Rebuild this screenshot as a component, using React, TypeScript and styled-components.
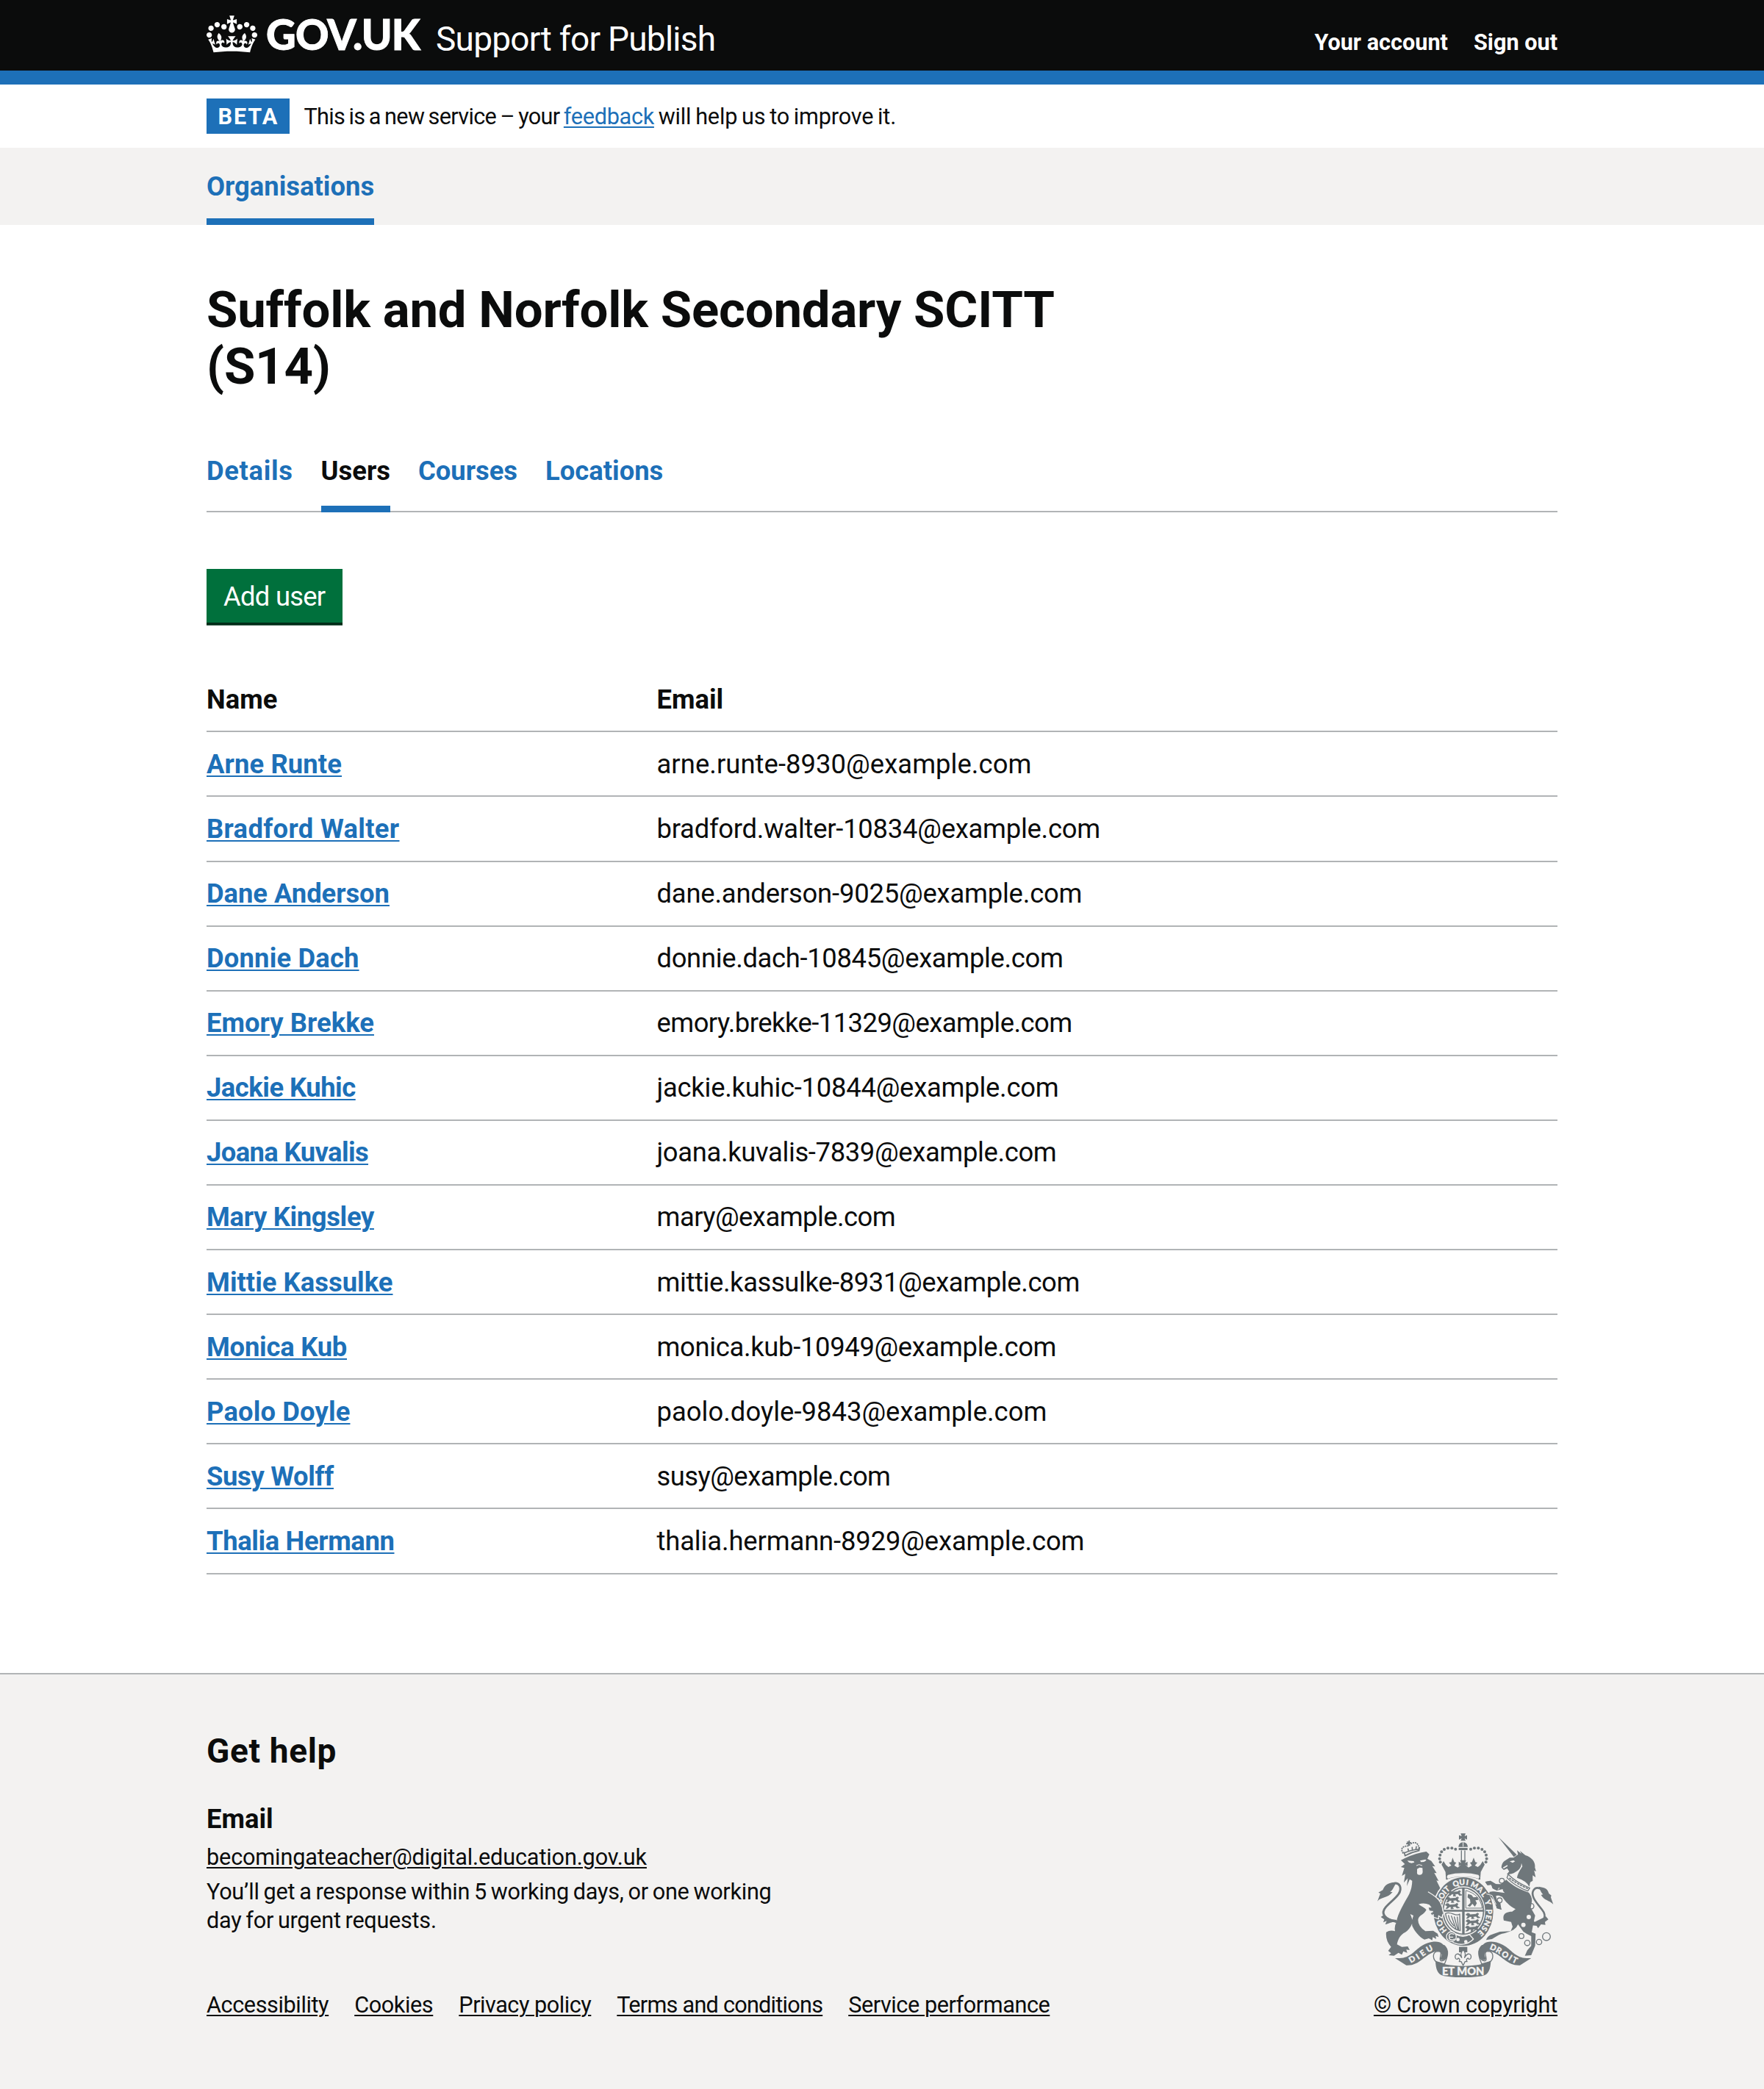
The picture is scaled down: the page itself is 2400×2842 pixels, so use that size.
import React from 'react';
import styled, { createGlobalStyle } from 'styled-components';

const color = {
  ink: '#0b0c0c',
  link: '#1d70b8',
  line: '#b1b4b6',
  panel: '#f3f2f1',
  green: '#00703c',
  greenShadow: '#002d18',
  arms: '#6f777b',
};

const GlobalStyle = createGlobalStyle`
  *, *::before, *::after { box-sizing: border-box; }
  body {
    margin: 0;
    background: #fff;
    color: ${color.ink};
    font-family: Roboto, "Liberation Sans", Arial, sans-serif;
    font-size: 36.4px;
    line-height: 48px;
    -webkit-font-smoothing: antialiased;
  }
  h1, h2, h3, p, ul { margin: 0; padding: 0; }
  ul { list-style: none; }
`;

const Container = styled.div`
  width: 1838px;
  margin: 0 auto;
`;

const Label = styled.span<{ $track?: number }>`
  letter-spacing: ${(p) => p.$track ?? 0}px;
`;

const Link = styled.a<{ $track?: number; $tone?: string }>`
  color: ${(p) => p.$tone ?? color.link};
  letter-spacing: ${(p) => p.$track ?? 0}px;
  white-space: nowrap;
  text-decoration: underline;
  text-decoration-thickness: 2.2px;
  text-underline-offset: 2.8px;
`;

/* Header */
const Header = styled.header`
  height: 115px;
  background: ${color.ink};
  border-bottom: 19px solid ${color.link};
  color: #fff;
`;
const HeaderRow = styled(Container)`
  display: flex;
  align-items: flex-start;
`;
const Crown = styled.svg`
  width: 69px;
  height: 51px;
  margin-top: 20.5px;
  fill: #fff;
`;
const Wordmark = styled.span`
  margin: 17.2px 0 0 12px;
  width: 231px;
  font-family: Lato, Roboto, sans-serif;
  font-size: 56.2px;
  font-weight: 900;
  line-height: 60px;
  letter-spacing: -0.8px;
  -webkit-text-stroke: 0.9px #fff;
`;
const ServiceName = styled.span`
  margin-top: 23.6px;
  font-size: 46px;
  line-height: 58px;
  letter-spacing: -0.75px;
`;
const AccountNav = styled.nav`
  display: flex;
  gap: 35px;
  margin: 38.5px 0 0 auto;
  font-size: 30.63px;
  font-weight: 700;
  line-height: 38px;
`;

/* Phase banner */
const PhaseBanner = styled(Container)`
  display: flex;
  align-items: center;
  height: 86px;
  font-size: 30.63px;
  line-height: 48px;
`;
const PhaseTag = styled.strong`
  width: 113px;
  height: 48px;
  margin-right: 19.5px;
  padding: 1px 0 0 15.5px;
  background: ${color.link};
  color: #fff;
  letter-spacing: 1.9px;
`;
const PhaseText = styled.p`
  padding-top: 1px;
  word-spacing: -1.6px;
`;

/* Navigation */
const PrimaryNav = styled.nav`
  height: 105px;
  background: ${color.panel};
`;
const PrimaryRow = styled(Container)`
  display: flex;
`;
const PrimaryItem = styled.a`
  height: 105px;
  padding-top: 29px;
  border-bottom: 9px solid ${color.link};
  color: ${color.link};
  font-weight: 700;
`;
const Title = styled.h1`
  width: 1220px;
  padding-top: 78px;
  font-size: 68.9px;
  line-height: 76.6px;
  letter-spacing: -0.2px;
`;
const Tabs = styled.nav`
  display: flex;
  gap: 38px;
  margin-top: 80.3px;
  border-bottom: 2px solid ${color.line};
`;
const Tab = styled.a<{ $current?: boolean }>`
  margin-bottom: -2px;
  padding-bottom: 23px;
  border-bottom: 9px solid ${(p) => (p.$current ? color.link : 'transparent')};
  color: ${(p) => (p.$current ? color.ink : color.link)};
  font-weight: 700;
`;
const AddButton = styled.button`
  display: block;
  width: 184.5px;
  height: 73px;
  margin: 76.6px 0 0;
  padding: 2px 0 0;
  border: 0;
  background: ${color.green};
  box-shadow: 0 3.8px 0 ${color.greenShadow};
  color: #fff;
  font: inherit;
  letter-spacing: -0.75px;
`;

/* Table */
const Table = styled.div`
  margin-top: 61.2px;
`;
const Row = styled.div`
  display: grid;
  grid-template-columns: 612.5px 1fr;
  height: 88.1px;
  padding-top: 19.4px;
  border-bottom: 2px solid ${color.line};
`;
const Cell = styled.div<{ $strong?: boolean }>`
  font-weight: ${(p) => (p.$strong ? 700 : 400)};
`;

/* Footer */
const Footer = styled.footer`
  height: 567px;
  margin-top: 134px;
  border-top: 2px solid ${color.line};
  background: ${color.panel};
  font-size: 30.63px;
  line-height: 38.3px;
`;
const FooterRow = styled(Container)`
  display: flex;
  justify-content: space-between;
  align-items: flex-end;
  padding-top: 76px;
`;
const HelpTitle = styled.h2`
  font-size: 46px;
  line-height: 57.4px;
  letter-spacing: 0.65px;
`;
const HelpSubtitle = styled.h3`
  margin: 39.6px 0 9.1px;
  font-size: 36.4px;
  line-height: 48px;
`;
const HelpText = styled.p`
  width: 800px;
  margin-top: 9.4px;
  letter-spacing: -0.27px;
  word-spacing: -1.4px;
`;
const FooterLinks = styled.ul`
  display: flex;
  gap: 35px;
  margin-top: 76.7px;
`;
const Licence = styled.div`
  display: flex;
  flex-direction: column;
  align-items: center;
  width: 250px;
`;
const Arms = styled.svg`
  width: 239.3px;
  height: 196.3px;
  margin-bottom: 18.6px;
  fill: ${color.arms};
  stroke-linecap: round;
  stroke-linejoin: round;

  .line { fill: none; stroke: ${color.arms}; }
  .gap { fill: ${color.panel}; }
  .cut { fill: none; stroke: ${color.panel}; }
  text {
    fill: ${color.panel};
    stroke: ${color.panel};
    stroke-width: 1;
    font-family: Lato, sans-serif;
    font-weight: 900;
    text-anchor: middle;
  }
`;

const CrownMark = () => (
  <Crown viewBox="0 0 132 97" aria-hidden="true">
    <path d="M25 30.2c3.5 1.5 7.7-.2 9.1-3.7 1.5-3.6-.2-7.8-3.9-9.2-3.6-1.4-7.6.3-9.1 3.9-1.4 3.5.3 7.5 3.9 9zM9 39.5c3.6 1.5 7.8-.2 9.2-3.7 1.5-3.6-.2-7.8-3.9-9.1-3.6-1.5-7.6.2-9.1 3.8-1.4 3.5.3 7.5 3.8 9zM4.4 57.2c3.5 1.5 7.7-.2 9.1-3.8 1.5-3.6-.2-7.7-3.9-9.1-3.5-1.5-7.6.3-9.1 3.8-1.4 3.5.3 7.6 3.9 9.1zm38.3-21.4c3.5 1.5 7.7-.2 9.1-3.8 1.5-3.6-.2-7.7-3.9-9.1-3.6-1.5-7.6.3-9.1 3.8-1.3 3.6.4 7.7 3.9 9.1zm64.4-5.6c-3.6 1.5-7.8-.2-9.1-3.7-1.5-3.6.2-7.8 3.8-9.2 3.6-1.4 7.7.3 9.2 3.9 1.3 3.5-.4 7.5-3.9 9zm15.9 9.3c-3.6 1.5-7.7-.2-9.1-3.7-1.5-3.6.2-7.8 3.7-9.1 3.6-1.5 7.7.2 9.2 3.8 1.5 3.5-.3 7.5-3.8 9zm4.7 17.7c-3.6 1.5-7.8-.2-9.2-3.8-1.5-3.6.2-7.7 3.9-9.1 3.6-1.5 7.7.3 9.2 3.8 1.3 3.5-.4 7.6-3.9 9.1zM89.3 35.8c-3.6 1.5-7.8-.2-9.2-3.8-1.4-3.6.2-7.7 3.9-9.1 3.6-1.5 7.7.3 9.2 3.8 1.4 3.6-.3 7.7-3.9 9.1zM69.7 17.7l8.9 4.7V9.3l-8.9 2.8c-.2-.3-.5-.6-.9-.9L72.4 0H59.6l3.5 11.2c-.3.3-.6.5-.9.9l-8.8-2.8v13.1l8.8-4.7c.3.3.6.7.9.9l-5 15.4v.1c-.2.8-.4 1.6-.4 2.4 0 4.1 3.1 7.5 7 8.1h.2c.3 0 .7.1 1 .1.4 0 .7 0 1-.1h.2c4-.6 7.1-4.1 7.1-8.1 0-.8-.1-1.7-.4-2.4V34l-5.1-15.4c.4-.2.7-.6 1-.9zM66 92.8c16.9 0 32.8 1.1 47.1 3.2 4-16.9 8.9-26.7 14-33.5l-9.6-3.4c1 4.9 1.1 7.2 0 10.2-1.5-1.4-3-4.3-4.2-8.7L108.6 76c2.8-2 5-3.2 7.5-3.3-4.4 9.4-10 11.9-13.6 11.2-4.3-.8-6.3-4.6-5.6-7.9 1-4.7 5.7-5.9 8-.5 4.3-8.7-3-11.4-7.6-8.8 7.1-7.2 7.9-13.5 2.1-21.1-8 6.1-8.1 12.3-4.5 20.8-4.7-5.4-12.1-2.5-9.5 6.2 3.4-5.2 7.9-2 7.2 3.1-.6 4.3-6.4 7.8-13.5 7.2-10.3-.9-10.9-8-11.2-13.8 2.5-.5 7.1 1.8 11 7.3L80.2 60c-4.1 4.4-8 5.3-12.3 5.4 1.4-4.4 8-11.6 8-11.6H55.5s6.4 7.2 7.9 11.6c-4.2-.1-8-1-12.3-5.4l1.4 16.4c3.9-5.5 8.5-7.7 10.9-7.3-.3 5.8-.9 12.8-11.1 13.8-7.2.6-12.9-2.9-13.5-7.2-.7-5 3.8-8.3 7.1-3.1 2.7-8.7-4.6-11.6-9.4-6.2 3.7-8.5 3.6-14.7-4.6-20.8-5.8 7.6-5 13.9 2.2 21.1-4.7-2.6-11.9.1-7.7 8.8 2.3-5.5 7.1-4.2 8.1.5.7 3.3-1.3 7.1-5.7 7.9-3.5.7-9-1.8-13.5-11.2 2.5.1 4.7 1.3 7.5 3.3l-4.7-15.4c-1.2 4.4-2.7 7.2-4.3 8.7-1.1-3-.9-5.3 0-10.2l-9.5 3.4c5 6.9 9.9 16.7 14 33.5 14.8-2.1 30.8-3.2 47.7-3.2z" />
  </Crown>
);

/* Garter motto: each letter with its clockwise angle from the top. */
const motto: [string, number][] = [
  ['H', -128], ['O', -113], ['S', -68], ['O', -57], ['I', -48], ['T', -40],
  ['Q', -17], ['U', -3], ['I', 9], ['M', 26], ['A', 41], ['L', 54], ['Y', 72],
  ['P', 90], ['E', 101], ['N', 113], ['S', 125], ['E', 137],
];
const crownPearls: [number, number][] = [
  [329, 186], [326, 172], [328, 157], [334, 144], [345, 134], [360, 129], [376, 129], [391, 133],
];
const scroll: [string, number, number, number][] = [
  ['D', 213, 582, -30], ['I', 236, 571, -33], ['E', 257, 557, -35], ['U', 284, 539, -28],
  ['D', 545, 534, 22], ['R', 568, 546, 30], ['O', 594, 563, 33], ['I', 615, 576, 32], ['T', 634, 586, 25],
];
const chain: [number, number, number][] = [
  [580, 262, 10], [571, 342, 10], [700, 366, 11], [660, 488, 10], [684, 516, 11], [732, 512, 11], [762, 490, 16],
];

const LionPassant = ({ x, y }: { x: number; y: number }) => (
  <g transform={`translate(${x} ${y})`}>
    <path
      stroke={color.arms}
      strokeWidth="2.5"
      d="M0 6l6-5 7 1 4 5 22-2 8-5 5 4-5 4 3 7 7 3-10 2-6-7-10 1-3 6 5 2-11 1 2-8-8-1-6 6-8 2 6-9z"
    />
  </g>
);

const RoyalArms = () => (
  <Arms viewBox="72 68 718 589" role="img" aria-label="Royal coat of arms">
    {/* lion */}
    <path d="M168 178L186 169Q232 148 272 143L284 154 276 172 292 181 308 204 296 202 314 231 304 230 322 263 313 261 332 300 320 302 316 322 330 360 330 392 318 402 324 414 306 410 312 398 298 404 290 396 301 386 285 384 281 372 294 372 284 360Q262 350 240 358C252 366 266 372 272 381C262 402 240 402 238 422Q238 448 268 468L300 466 318 478 322 492 310 487 312 500 298 492 296 505 282 497 264 502C240 490 222 464 214 446Q212 420 219 404L206 398Q218 424 214 436Q204 460 186 472C166 482 156 500 152 522L172 532 196 530 204 545 190 543 194 556 178 550 172 564 158 556 140 568 118 566 128 558 116 548 128 532Q104 506 108 472Q124 462 144 468Q140 448 150 430C154 396 184 350 202 316Q214 290 214 262L204 256 192 284 196 252 180 270 186 234 172 242 182 210 168 206 184 194z" />
    <path className="gap" d="M194 180l26 2 3 5-12 3-10-3zM246 180l22-5 4 4-10 6-12 1zM234 214l10-6 12 2 1 16Q256 238 244 238T234 226z" />
    <path className="cut" strokeWidth="3" d="M232 200l10-4 12 4" />
    <path className="line" strokeWidth="9" d="M150 430C100 418 84 396 106 370C132 340 176 316 164 284C158 270 140 268 122 280" />
    <path d="M150 270C122 268 104 274 94 300L76 310 84 314 72 346C88 326 112 336 134 308L124 308C136 300 140 284 150 270zM86 410L100 420 96 432 110 426 104 440C124 438 130 424 156 436L150 422C124 420 104 414 98 402z" />
    <path className="line" strokeWidth="5" d="M184 160Q210 146 242 139M181 149Q210 136 240 134M186 160l-6-14M242 139l2-12M200 142l-3-10M215 138l-1-12M229 135l2-12" />
    <path className="line" strokeWidth="6" strokeDasharray="1 8" d="M176 148C164 128 178 120 200 120C206 108 238 92 242 132" />
    <path d="M192 100l6 3 2-6 5 1-1 6 7 1-1 5-6 1 1 7-6 2-3-7-6 1-1-5 5-3z" />

    {/* unicorn */}
    <path d="M566 84L641 156 629 165z" />
    <path d="M628 168L646 155 642 138 660 152 654 140 676 158C704 166 718 188 715 208L720 224 712 220 718 248 706 240 706 262 696 268 692 286Q680 262 642 250Q644 232 664 204L660 190Q660 214 636 226Q622 236 600 236L610 224 602 212 588 218 578 208Q580 190 590 182L612 168z" />
    <path className="gap" d="M612 183l16-4 6 4-10 6zM584 208l18-10 2 4-16 10z" />
    <path className="line" strokeWidth="4" d="M606 236C632 262 656 276 694 292M601 250C626 276 654 292 686 304M606 236l-5 14M694 292l-8 12" />
    <path className="line" strokeWidth="5" strokeDasharray="6 7" d="M612 252C632 266 656 282 686 294" />
    <path d="M598 258C624 282 652 298 690 310Q706 330 702 350L698 372 716 404 708 440 702 472 718 478 716 528 700 566 674 568 684 546 700 528 700 488Q682 480 668 470L646 440Q642 452 628 462C610 474 584 476 566 484L540 500 516 504Q520 490 532 484L572 470 616 468 624 450 618 430 588 424C580 396 600 388 622 388L636 378C610 364 594 346 582 328L556 318 552 336 574 352 578 380 558 374 560 354 538 318 512 314Q530 304 548 306L592 312Q582 304 584 296L560 302 544 294 540 278 522 280 512 266 534 262 556 276 576 276z" />
    <path className="line" strokeWidth="8" d="M716 436C756 440 764 404 744 380C722 352 694 322 710 300C720 286 736 292 748 300" />
    <path d="M730 286C752 290 766 290 772 314L782 322 780 330 790 358C772 340 754 344 740 320L748 318C738 308 736 296 730 286zM704 420L714 430 760 408 770 420 756 430 758 442 740 440 728 456 722 446 702 444z" />
    <circle className="gap" cx="690" cy="410" r="9" />
    <circle className="gap" cx="668" cy="442" r="9" />
    <circle className="gap" cx="562" cy="290" r="8" />
    {chain.map(([x, y, r]) => (
      <circle key={`${x}-${y}`} cx={x} cy={y} r={r} className="line" strokeWidth="4" />
    ))}

    {/* garter */}
    <ellipse className="gap" cx="423" cy="388" rx="127" ry="144" />
    <ellipse cx="423" cy="388" rx="122" ry="140" />
    <ellipse className="cut" cx="423" cy="386" rx="87" ry="99" strokeWidth="4" />
    <ellipse className="gap" cx="423" cy="386" rx="80" ry="92" />
    <path d="M418 290h10v190h-10zM340 381h168v7H340z" />
    <LionPassant x={360} y={302} />
    <LionPassant x={352} y={328} />
    <LionPassant x={350} y={354} />
    <LionPassant x={434} y={394} />
    <LionPassant x={434} y={420} />
    <LionPassant x={432} y={446} />
    <path className="line" strokeWidth="3" d="M434 302C470 312 494 334 500 374H434z" />
    <path d="M442 316l14 4 8 10 16-2 4 12-12 2 6 12-8 14-10-12-10 12-10-4 12-12-2-14-10-8z" />
    <path className="line" strokeWidth="4" d="M350 396C356 434 380 460 410 466L408 398C392 412 372 384 350 396M362 404C366 426 376 438 384 446M374 406L392 456M386 410L400 460M398 410L404 462" />
    {motto.map(([char, deg], i) => {
      const a = (deg * Math.PI) / 180;
      const x = 423 + 105 * Math.sin(a);
      const y = 388 - 120 * Math.cos(a);
      return (
        <text key={i} fontSize="31" transform={`translate(${x} ${y}) rotate(${deg})`} dy="11">
          {char}
        </text>
      );
    })}
    {/* paw and hooves over the garter */}
    <path d="M276 306Q312 326 324 346 336 370 340 394L332 410 320 400 322 414 306 408 312 396 294 400 300 386 284 380 294 370z" />
    <path className="cut" strokeWidth="4" d="M280 308Q318 330 328 348 340 372 343 396L334 414 322 405 322 418 302 411" />
    <path d="M512 267L532 262 556 276 576 280 560 302 540 292 536 278 520 280zM522 313L556 308 576 320 556 324 562 350 580 380 560 374 546 340z" />
    <path className="cut" strokeWidth="3" d="M508 268L522 284 536 282 542 298M518 316L540 322 556 358" />
    {/* buckle */}
    <path className="cut" strokeWidth="4" d="M384 476C404 490 428 492 448 482L464 500C440 526 400 528 376 510" />
    <circle cx="374" cy="490" r="20" stroke={color.panel} strokeWidth="4" />
    <path className="cut" strokeWidth="4" d="M384 480C368 474 362 484 366 492C362 500 374 508 386 500M366 492h14" />
    <circle className="gap" cx="401" cy="502" r="7" />
    <circle className="gap" cx="433" cy="511" r="7" />

    {/* crown */}
    <path d="M412 69h20l-4 11 10-4v18l-10-5 4 10h-20l4-10-11 5V76l11 4z" />
    <path d="M403 124C404 98 440 98 441 124zM404 128h36v9h-36z" />
    <path className="cut" strokeWidth="3" d="M422 104v18" />
    <path className="line" strokeWidth="4" d="M415 140v38M429 140v38" />
    {crownPearls.map(([x, y]) => (
      <React.Fragment key={x}>
        <circle cx={x} cy={y} r="6" />
        <circle cx={844 - x} cy={y} r="6" />
      </React.Fragment>
    ))}
    <path d="M334 196L342 182 352 198 362 206 374 200 364 188 374 186 379 168 386 186 394 188 386 200 400 208 414 196 404 202V184L414 190 410 178H434L430 190 440 184V202L430 196 444 208 458 200 450 188 458 186 465 168 472 186 480 188 470 200 482 206 492 198 502 182 510 196 494 226 492 252Q494 258 488 258C466 242 378 242 356 258Q350 258 352 252L350 226z" />
    <path className="gap" d="M360 238C396 228 448 228 484 238Q492 246 484 254C460 242 384 242 360 254Q352 246 360 238z" />

    {/* plinth and scroll */}
    <path d="M405 532h34v22h-34z" />
    <path className="gap" stroke={color.arms} strokeWidth="4" d="M422 544C410 556 412 566 416 576C404 552 386 560 390 576C392 584 400 584 402 578C408 580 410 586 406 592H414L422 608 430 592H438C434 586 436 580 442 578C444 584 452 584 454 576C458 560 440 552 428 576C432 566 434 556 422 544z" />
    <path d="M144 578C200 582 214 556 246 532C282 508 320 504 338 520C354 534 362 556 352 576C342 590 332 588 328 580C342 560 330 546 312 550C262 562 246 610 190 607z" />
    <path d="M700 578C644 582 630 556 598 532C562 508 524 504 506 520C490 534 482 556 492 576C502 590 512 588 516 580C502 560 514 546 532 550C582 562 598 610 654 607z" />
    <path className="gap" stroke={color.arms} strokeWidth="4" d="M310 592C296 576 298 552 318 550C338 550 330 560 328 580C326 596 346 590 352 576C362 560 352 540 344 526C372 548 352 586 346 602zM534 592C548 576 546 552 526 550C506 550 514 560 516 580C518 596 498 590 492 576C482 560 492 540 500 526C472 548 492 586 498 602z" />
    <path d="M309 588C330 602 372 610 422 610C472 610 514 602 535 588C534 624 526 646 500 651C450 659 394 659 344 651C318 646 310 624 309 588z" />
    {scroll.map(([char, x, y, deg], i) => (
      <text key={i} fontSize="33" transform={`translate(${x} ${y}) rotate(${deg})`} dy="12">
        {char}
      </text>
    ))}
    <text x="422" y="647" fontSize="44">ET MON</text>
  </Arms>
);

const tabs = [
  { label: 'Details', track: 0.65 },
  { label: 'Users', track: 0, current: true },
  { label: 'Courses', track: 0 },
  { label: 'Locations', track: 0 },
];

type User = { name: string; email: string; nameTrack: number; emailTrack: number };
const users: User[] = [
  { name: 'Arne Runte', email: 'arne.runte-8930@example.com', nameTrack: 0.11, emailTrack: 0.06 },
  { name: 'Bradford Walter', email: 'bradford.walter-10834@example.com', nameTrack: 0.32, emailTrack: -0.24 },
  { name: 'Dane Anderson', email: 'dane.anderson-9025@example.com', nameTrack: -0.05, emailTrack: -0.19 },
  { name: 'Donnie Dach', email: 'donnie.dach-10845@example.com', nameTrack: 0.16, emailTrack: -0.33 },
  { name: 'Emory Brekke', email: 'emory.brekke-11329@example.com', nameTrack: 0.03, emailTrack: -0.53 },
  { name: 'Jackie Kuhic', email: 'jackie.kuhic-10844@example.com', nameTrack: -0.49, emailTrack: -0.24 },
  { name: 'Joana Kuvalis', email: 'joana.kuvalis-7839@example.com', nameTrack: -0.61, emailTrack: -0.35 },
  { name: 'Mary Kingsley', email: 'mary@example.com', nameTrack: -0.34, emailTrack: -0.53 },
  { name: 'Mittie Kassulke', email: 'mittie.kassulke-8931@example.com', nameTrack: 0.02, emailTrack: -0.39 },
  { name: 'Monica Kub', email: 'monica.kub-10949@example.com', nameTrack: -0.25, emailTrack: -0.33 },
  { name: 'Paolo Doyle', email: 'paolo.doyle-9843@example.com', nameTrack: 0.13, emailTrack: 0.03 },
  { name: 'Susy Wolff', email: 'susy@example.com', nameTrack: -0.34, emailTrack: -0.53 },
  { name: 'Thalia Hermann', email: 'thalia.hermann-8929@example.com', nameTrack: -0.37, emailTrack: -0.13 },
];
const footerLinks = [
  { label: 'Accessibility', track: -0.4 },
  { label: 'Cookies', track: -0.4 },
  { label: 'Privacy policy', track: -0.47 },
  { label: 'Terms and conditions', track: -0.75 },
  { label: 'Service performance', track: -0.44 },
];

export default function App() {
  return (
    <>
      <GlobalStyle />
      <Header>
        <HeaderRow>
          <CrownMark />
          <Wordmark>GOV.UK</Wordmark>
          <ServiceName>Support for Publish</ServiceName>
          <AccountNav>
            <span>Your account</span>
            <span>Sign out</span>
          </AccountNav>
        </HeaderRow>
      </Header>
      <PhaseBanner>
        <PhaseTag>BETA</PhaseTag>
        <PhaseText>
          <Label $track={-0.67}>This is a new service – your </Label>
          <Link $track={-0.3}>feedback</Link>
          <Label $track={-0.18}> will help us to improve it.</Label>
        </PhaseText>
      </PhaseBanner>
      <PrimaryNav>
        <PrimaryRow>
          <PrimaryItem>Organisations</PrimaryItem>
        </PrimaryRow>
      </PrimaryNav>
      <Container as="main">
        <Title>Suffolk and Norfolk Secondary SCITT (S14)</Title>
        <Tabs>
          {tabs.map((t) => (
            <Tab key={t.label} $current={t.current}>
              <Label $track={t.track}>{t.label}</Label>
            </Tab>
          ))}
        </Tabs>
        <AddButton>Add user</AddButton>
        <Table role="table">
          <Row role="row">
            <Cell role="columnheader" $strong>Name</Cell>
            <Cell role="columnheader" $strong>Email</Cell>
          </Row>
          {users.map((u) => (
            <Row role="row" key={u.email}>
              <Cell role="cell" $strong>
                <Link $track={u.nameTrack}>{u.name}</Link>
              </Cell>
              <Cell role="cell">
                <Label $track={u.emailTrack}>{u.email}</Label>
              </Cell>
            </Row>
          ))}
        </Table>
      </Container>
      <Footer>
        <FooterRow>
          <div>
            <HelpTitle>Get help</HelpTitle>
            <HelpSubtitle>Email</HelpSubtitle>
            <Link $tone={color.ink} $track={-0.14}>becomingateacher@digital.education.gov.uk</Link>
            <HelpText>You’ll get a response within 5 working days, or one working day for urgent requests.</HelpText>
            <FooterLinks>
              {footerLinks.map((l) => (
                <li key={l.label}>
                  <Link $tone={color.ink} $track={l.track}>{l.label}</Link>
                </li>
              ))}
            </FooterLinks>
          </div>
          <Licence>
            <RoyalArms />
            <Link $tone={color.ink} $track={-0.2}>© Crown copyright</Link>
          </Licence>
        </FooterRow>
      </Footer>
    </>
  );
}
